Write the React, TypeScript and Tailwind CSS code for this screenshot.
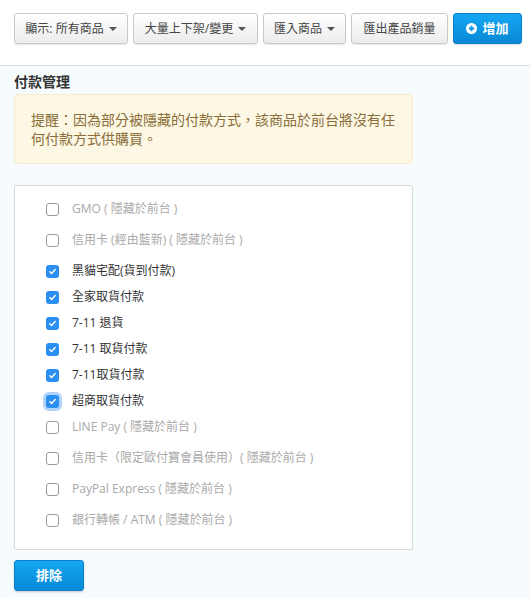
import { useState } from 'react';

interface PaymentOption {
  id: string;
  label: string;
  hidden: boolean;
}

const options: PaymentOption[] = [
  { id: 'gmo', label: 'GMO ( 隱藏於前台 )', hidden: true },
  { id: 'neweb', label: '信用卡 (經由藍新) ( 隱藏於前台 )', hidden: true },
  { id: 'tcat', label: '黑貓宅配(貨到付款)', hidden: false },
  { id: 'family', label: '全家取貨付款', hidden: false },
  { id: '711-return', label: '7-11 退貨', hidden: false },
  { id: '711-pay', label: '7-11 取貨付款', hidden: false },
  { id: '711-pay2', label: '7-11取貨付款', hidden: false },
  { id: 'cvs', label: '超商取貨付款', hidden: false },
  { id: 'linepay', label: 'LINE Pay ( 隱藏於前台 )', hidden: true },
  { id: 'allpay', label: '信用卡（限定歐付寶會員使用）( 隱藏於前台 )', hidden: true },
  { id: 'paypal', label: 'PayPal Express ( 隱藏於前台 )', hidden: true },
  { id: 'atm', label: '銀行轉帳 / ATM ( 隱藏於前台 )', hidden: true },
];

const font = "font-['Open_Sans','Noto_Sans_CJK_TC',sans-serif]";

function Caret() {
  return <span className="ml-[5px] inline-block border-x-[4px] border-t-[4px] border-x-transparent border-t-[#555]" />;
}

function ToolButton({ children, caret, width }: { children: React.ReactNode; caret?: boolean; width: string }) {
  return (
    <button
      className={`flex h-[31px] shrink-0 items-center justify-center whitespace-nowrap rounded-[3px] border border-[#c9c9c9] bg-gradient-to-b from-white to-[#ececec] text-[12px] text-[#444] shadow-[0_1px_1px_rgba(0,0,0,0.08)] ${width}`}
    >
      {children}
      {caret && <Caret />}
    </button>
  );
}

function CheckBox({ checked, focused }: { checked: boolean; focused?: boolean }) {
  if (!checked) {
    return <span className="box-border h-[13px] w-[13px] shrink-0 rounded-[3px] border border-[#9a9a9a] bg-white" />;
  }
  return (
    <span
      className={`flex h-[13px] w-[13px] shrink-0 items-center justify-center rounded-[3px] bg-[#2b8ff2] ${
        focused ? 'shadow-[0_0_0_3px_rgba(80,160,245,0.45)]' : ''
      }`}
    >
      <svg width="9" height="9" viewBox="0 0 10 10">
        <path d="M2 5.2l2 2L8 2.8" stroke="white" strokeWidth="1.6" fill="none" strokeLinecap="round" strokeLinejoin="round" />
      </svg>
    </span>
  );
}

export default function App() {
  const [checked] = useState<Record<string, boolean>>(
    Object.fromEntries(options.map((o) => [o.id, !o.hidden])),
  );

  return (
    <div className={`min-h-[598px] w-[530px] overflow-hidden bg-[#f6fcfe] ${font}`}>
      <div className="flex h-[66px] gap-[5px] border-b border-[#dcdcdc] bg-white pl-[14px] pt-[13px]">
        <ToolButton caret width="w-[114px]">顯示: 所有商品</ToolButton>
        <ToolButton caret width="w-[125px]">大量上下架/變更</ToolButton>
        <ToolButton caret width="w-[83px]">匯入商品</ToolButton>
        <ToolButton width="w-[97px]">匯出產品銷量</ToolButton>
        <button className="flex h-[31px] w-[69px] shrink-0 items-center justify-center gap-[5px] whitespace-nowrap rounded-[3px] border border-[#0a7fc9] bg-gradient-to-b from-[#16a7f2] to-[#0788d6] text-[13px] font-bold text-white shadow-[0_1px_1px_rgba(0,0,0,0.12)]">
          <svg width="11" height="11" viewBox="0 0 12 12">
            <circle cx="6" cy="6" r="6" fill="white" />
            <path d="M6 3v6M3 6h6" stroke="#0b93e0" strokeWidth="2" />
          </svg>
          增加
        </button>
      </div>

      <div className="px-[14px]">
        <h2 className="mt-[6px] text-[14px] font-bold leading-[20px] text-[#333]">付款管理</h2>
        <div className="mt-[2px] w-[399px] rounded-[4px] border border-[#faebcc] bg-[#fcf8e3] py-[15px] pl-[16px] pr-[6px] text-[14px] leading-[19px] text-[#8a6d3b]">
          <span className="whitespace-nowrap">提醒：因為部分被隱藏的付款方式，該商品於前台將沒有任</span>
          <br />
          何付款方式供購買。
        </div>

        <div className="mt-[21px] w-[399px] rounded-[2px] border border-[#d9d9d9] bg-white pb-[11px] pl-[31px] pt-[10px]">
          {options.map((o) => (
            <label
              key={o.id}
              className={`flex h-[26px] items-center gap-[13px] text-[12px] ${
                o.hidden ? 'mb-[5px] text-[#a9a9a9]' : 'text-[#333]'
              }`}
            >
              <CheckBox checked={checked[o.id]} focused={o.id === 'cvs'} />
              <span>{o.label}</span>
            </label>
          ))}
        </div>

        <button className="mt-[10px] h-[31px] w-[70px] rounded-[3px] border border-[#0a7fc9] bg-gradient-to-b from-[#16a7f2] to-[#0788d6] text-[13px] font-bold text-white shadow-[0_1px_2px_rgba(0,0,0,0.2)]">
          排除
        </button>
      </div>
    </div>
  );
}
